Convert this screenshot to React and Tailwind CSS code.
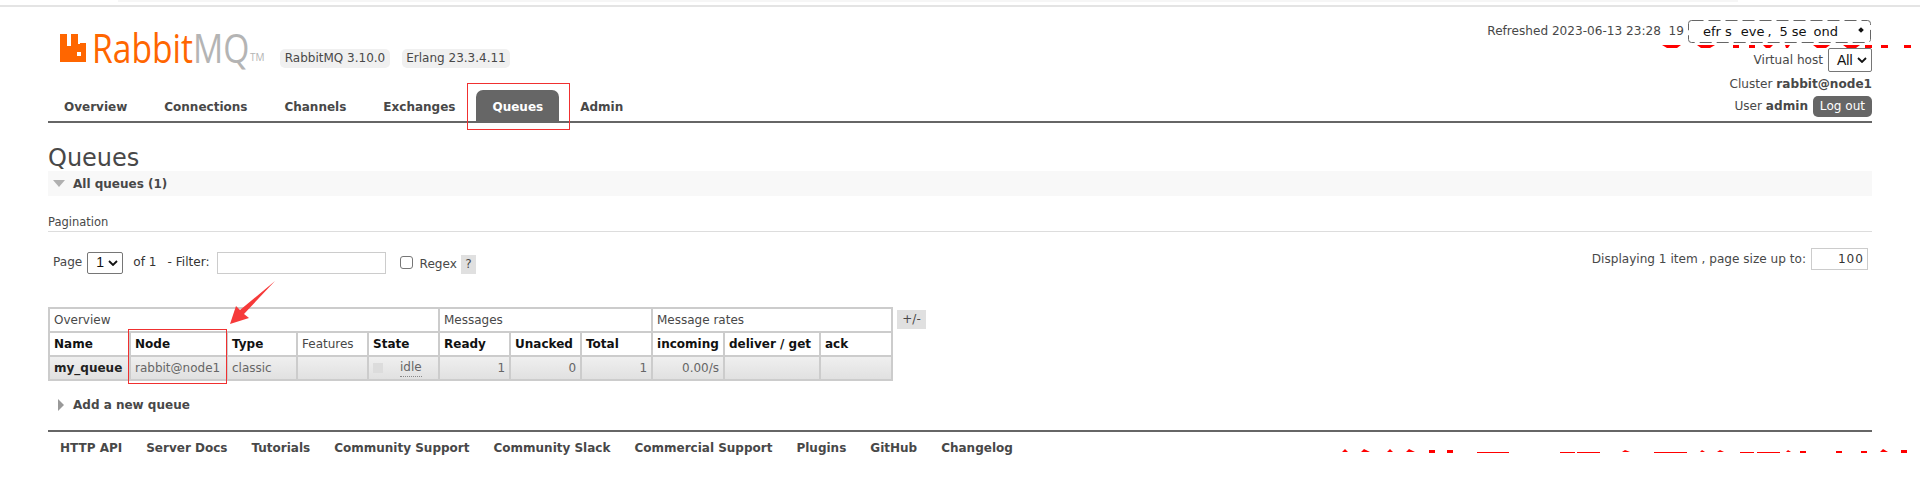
const tabs = ["Overview", "Connections", "Channels", "Exchanges", "Queues", "Admin"];
const footerLinks = ["HTTP API", "Server Docs", "Tutorials", "Community Support", "Community Slack", "Commercial Support", "Plugins", "GitHub", "Changelog"];

const cell = "border-2 border-[#ccc] px-[4px] h-[24px] leading-[20px] whitespace-nowrap";

const Chevron = () => (
  <svg width="10" height="6" viewBox="0 0 10 6" className="absolute right-[4px] top-1/2 -mt-[3px]">
    <path d="M1 1l4 4 4-4" fill="none" stroke="#111" strokeWidth="1.8" />
  </svg>
);

const FakeSelect = ({ value, className }) => (
  <div className={"relative bg-white border border-[#767676] rounded-[2px] text-[#111] text-[14px] font-['Liberation_Sans',sans-serif] flex items-center pl-[8px] " + className}>
    {value}
    <Chevron />
  </div>
);

const Logo = () => (
  <div className="flex items-start h-[36px] w-[220px] ml-[12px]">
    <svg width="26" height="28" viewBox="0 0 26 28" className="shrink-0">
      <path fillRule="evenodd" fill="#ff6600" d="M0 0H7V12H11V0H18V10H20V9H26V28H0ZM17 18V22H21V18Z" />
    </svg>
    <div className="ml-[6px] w-[156px] -mt-[11px] font-['Open_Sans'] font-normal text-[40px] leading-[50px] whitespace-nowrap scale-x-[0.84] origin-left">
      <span className="text-[#ff6600]">Rabbit</span>
      <span className="text-[#b4b4b4]">MQ</span>
    </div>
    <span className="font-['Open_Sans'] text-[#b4b4b4] text-[10px] leading-none mt-[18px] ml-[2px]">TM</span>
  </div>
);

const Header = () => (
  <div className="flex justify-between h-[114px] relative">
    <div className="flex flex-col">
      <div className="flex mt-[27px]">
        <Logo />
        <div className="flex gap-[12px] mt-[15px] text-[12px] text-[#484848]">
          <span className="bg-[#f0f0f0] rounded-[5px] h-[19px] w-[110px] leading-[19px] text-center">RabbitMQ 3.10.0</span>
          <span className="bg-[#f0f0f0] rounded-[5px] h-[19px] w-[108px] leading-[19px] text-center">Erlang 23.3.4.11</span>
        </div>
      </div>
      <nav className="flex mt-[20px] h-[32px] font-bold text-[12px] text-[#484848]">
        {tabs.map((t) => (
          <a
            key={t}
            className={
              "px-[16px] mr-[5px] h-[32px] leading-[34px] rounded-t-[7px] " +
              (t === "Queues" ? "bg-[#666] text-white" : "")
            }
          >
            {t}
          </a>
        ))}
      </nav>
    </div>
    <div className="flex flex-col items-end text-[12.1px] text-[#484848] pt-[13px]">
      <div className="flex items-center h-[23px]">
        <span className="mr-[5px] whitespace-pre">Refreshed 2023-06-13 23:28  19</span>
        <div className="relative w-[183px] h-[23px] bg-white text-[#111] flex items-center text-[13px]">
          <span className="ml-[14px]">efr</span>
          <span className="ml-[4px]">s</span>
          <span className="ml-[9px]">eve</span>
          <span className="ml-[3px]">,</span>
          <span className="ml-[8px]">5</span>
          <span className="ml-[4px]">se</span>
          <span className="ml-[7px]">ond</span>
          <span className="absolute right-[9px] top-[8px] w-[4px] h-[4px] bg-[#111] rotate-45" />
        </div>
      </div>
      <div className="flex items-center mt-[5px] h-[24px]">
        <span className="mr-[5px]">Virtual host</span>
        <FakeSelect value="All" className="w-[44px] h-[24px]" />
      </div>
      <div className="mt-[2px] h-[20px] leading-[20px]">Cluster <b>rabbit@node1</b></div>
      <div className="flex items-center mt-[2px] h-[21px]">
        <span>User <b>admin</b></span>
        <span className="ml-[5px] w-[59px] h-[21px] bg-[#666] text-white rounded-[5px] text-center leading-[21px]">Log out</span>
      </div>
    </div>
  </div>
);

const Pagination = () => (
  <div className="flex justify-between items-start text-[12.1px] text-[#484848] mt-[19px]">
    <div className="flex items-center h-[23px] pl-[5px]">
      <span>Page</span>
      <FakeSelect value="1" className="w-[36px] h-[22px] ml-[5px]" />
      <span className="ml-[10px] text-[#333]">of 1</span>
      <span className="ml-[11px] text-[#333]">- Filter:</span>
      <div className="ml-[7px] w-[169px] h-[22px] border border-[#ccc] bg-white" />
      <div className="ml-[14px] w-[13px] h-[13px] border border-[#767676] rounded-[3px] bg-white" />
      <span className="ml-[7px] mt-[3px]">Regex</span>
      <span className="ml-[4px] mt-[3px] w-[15px] h-[19px] bg-[#e0e0e0] text-center leading-[19px]">?</span>
    </div>
    <div className="flex items-center h-[22px] pr-[4px] -mt-[3px]">
      <span>Displaying 1 item , page size up to:</span>
      <div className="ml-[5px] w-[57px] h-[22px] border border-[#ccc] bg-white text-right pr-[3px] leading-[20px] text-[#333] tracking-[1px]">100</div>
    </div>
  </div>
);

const QueueTable = () => (
  <div className="flex mt-[33px] items-start text-[12px] text-[#484848]">
    <table className="border-collapse table-fixed w-[843px]">
      <colgroup>
        <col className="w-[81px]" />
        <col className="w-[97px]" />
        <col className="w-[70px]" />
        <col className="w-[71px]" />
        <col className="w-[71px]" />
        <col className="w-[71px]" />
        <col className="w-[71px]" />
        <col className="w-[71px]" />
        <col className="w-[72px]" />
        <col className="w-[96px]" />
        <col className="w-[72px]" />
      </colgroup>
      <thead>
        <tr>
          <th colSpan={5} className={cell + " font-normal text-left"}>Overview</th>
          <th colSpan={3} className={cell + " font-normal text-left"}>Messages</th>
          <th colSpan={3} className={cell + " font-normal text-left"}>Message rates</th>
        </tr>
        <tr className="text-[#111]">
          <th className={cell + " text-left"}>Name</th>
          <th className={cell + " text-left"}>Node</th>
          <th className={cell + " text-left"}>Type</th>
          <th className={cell + " text-left font-normal text-[#484848]"}>Features</th>
          <th className={cell + " text-left"}>State</th>
          <th className={cell + " text-left"}>Ready</th>
          <th className={cell + " text-left"}>Unacked</th>
          <th className={cell + " text-left"}>Total</th>
          <th className={cell + " text-left"}>incoming</th>
          <th className={cell + " text-left"}>deliver / get</th>
          <th className={cell + " text-left"}>ack</th>
        </tr>
      </thead>
      <tbody>
        <tr className="bg-gradient-to-b from-[#f0f0f0] to-[#e0e0e0] text-[#666]">
          <td className={cell + " font-bold text-[#222]"}>my_queue</td>
          <td className={cell}>rabbit@node1</td>
          <td className={cell}>classic</td>
          <td className={cell} />
          <td className={cell}>
            <div className="flex items-center">
              <span className="w-[10px] h-[10px] bg-[#dcdcdc]" />
              <span className="ml-[17px] border-b border-dotted border-[#888] leading-[17px]">idle</span>
            </div>
          </td>
          <td className={cell + " text-right"}>1</td>
          <td className={cell + " text-right"}>0</td>
          <td className={cell + " text-right"}>1</td>
          <td className={cell + " text-right"}>0.00/s</td>
          <td className={cell} />
          <td className={cell} />
        </tr>
      </tbody>
    </table>
    <span className="ml-[4px] mt-[3px] w-[29px] h-[19px] bg-[#e0e0e0] text-center leading-[19px]">+/-</span>
  </div>
);

const Footer = () => (
  <footer className="border-t-2 border-[#666] mt-[15px] pl-[12px] pt-[7px] flex gap-[24px] font-bold text-[12px] text-[#484848]">
    {footerLinks.map((l) => (
      <a key={l}>{l}</a>
    ))}
  </footer>
);

// hand-drawn markup from the original screenshot sits above the page
const Annotations = () => (
  <>
    <div className="absolute left-[467px] top-[83px] w-[103px] h-[47px] border border-[#f03030]" />
    <div className="absolute left-[128px] top-[329px] w-[99px] h-[55px] border border-[#f03030]" />
    <svg className="absolute left-0 top-0 pointer-events-none" width="1920" height="492">
      <path d="M275 281L244 314 249 318 230 324 236 306 240 310Z" fill="#f63a3a" />
      <rect x="1688.5" y="20.5" width="182" height="22" rx="3" fill="none" stroke="#666" strokeDasharray="12 5" />
      <path
        fill="#ff0000"
        d="M1662 45h19l-4 3h-10zM1697 45h18l-5 3h-9zM1733 45h6v3h-6zM1749 45h6v3h-6zM1763 45h10l-3 3h-4zM1785 45h5l-2 3h-2zM1813 45h17l-4 3h-9zM1843 45h17l-4 3h-9zM1865 45h7v3h-7zM1881 45h7v3h-7zM1904 45h7v3h-7z"
      />
      <path
        fill="#ff0000"
        d="M1342 452l3-3 3 3zM1361 452l3-3 6 3zM1387 452l3-3 3 3zM1406 452l3-3 6 3zM1429 450h6v3h-6zM1447 450h6v3h-6zM1477 452h32v1h-32zM1560 452h15v1h-15zM1577 452h23v1h-23zM1622 452l3-2 5 2zM1654 452h33v1h-33zM1700 452l2-2 3 2zM1717 452l3-2 4 2zM1740 452h14v1h-14zM1757 452h23v1h-23zM1786 452l2-2 3 2zM1800 451h6v2h-6zM1836 451h6v2h-6zM1861 451h6v2h-6zM1880 452l3-3 5 3zM1901 450h6v3h-6z"
      />
    </svg>
  </>
);

export default function App() {
  return (
    <div className="relative w-[1920px] h-[492px] bg-white overflow-hidden font-['DejaVu_Sans',sans-serif]">
      <div className="h-[2px] ml-[118px] w-[1620px] bg-[#f6f6f6]" />
      <div className="h-[2px] mt-[3px] bg-[#e4e4e4]" />
      <div className="px-[48px]">
        <Header />
        <div className="border-t-2 border-[#666]" />
        <h1 className="text-[24px] leading-[30px] text-[#484848] mt-[20px]">Queues</h1>
        <div className="h-[25px] bg-[#f8f8f8] flex items-center pl-[5px] font-bold text-[12px] text-[#484848] -mt-[2px]">
          <span className="w-0 h-0 border-x-[6px] border-x-transparent border-t-[7px] border-t-[#b0b0b0] mr-[8px]" />
          All queues (1)
        </div>
        <div className="text-[11.5px] text-[#484848] mt-[16px] h-[20px] border-b border-[#ddd] leading-[21px]">Pagination</div>
        <Pagination />
        <QueueTable />
        <div className="flex items-center mt-[14px] h-[20px] pl-[10px] font-bold text-[12px] text-[#484848]">
          <span className="w-0 h-0 border-y-[6px] border-y-transparent border-l-[6px] border-l-[#999] mr-[9px]" />
          Add a new queue
        </div>
        <Footer />
      </div>
      <Annotations />
    </div>
  );
}
